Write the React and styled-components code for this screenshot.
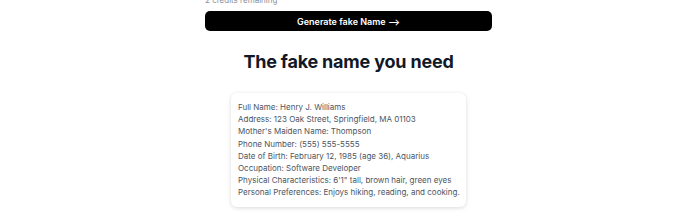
import React from "react";
import styled, { createGlobalStyle } from "styled-components";

const GlobalStyle = createGlobalStyle`
  html, body {
    margin: 0;
    padding: 0;
    background: #fff;
    font-family: Inter, "Noto Sans", sans-serif;
  }
`;

const Page = styled.div`
  display: flex;
  flex-direction: column;
  align-items: center;
  width: 700px;
  height: 220px;
  padding-right: 3px;
  box-sizing: border-box;
  overflow: hidden;
`;

const Column = styled.div`
  width: 287px;
  display: flex;
  flex-direction: column;
  align-items: center;
  margin-top: -5px;
`;

const Credits = styled.p`
  align-self: flex-start;
  margin: 0;
  font-size: 8px;
  line-height: 10px;
  color: #8b9099;
`;

const GenerateButton = styled.button`
  width: 100%;
  height: 20px;
  margin-top: 6px;
  border: none;
  border-radius: 5px;
  background: #000;
  color: #fff;
  font-family: Inter, sans-serif;
  font-size: 9px;
  font-weight: 600;
  cursor: pointer;
`;

const Heading = styled.h2`
  margin: 19px 0 0;
  font-size: 18px;
  line-height: 24px;
  font-weight: 700;
  color: #111827;
  letter-spacing: -0.2px;
`;

const Card = styled.div`
  margin-top: 19px;
  width: 235px;
  box-sizing: border-box;
  padding: 8px 7px;
  background: #fff;
  border-radius: 6px;
  box-shadow: 0 1px 4px rgba(0, 0, 0, 0.15);
`;

const Line = styled.p`
  margin: 0;
  font-size: 8px;
  line-height: 12.2px;
  color: #4b5563;
  white-space: nowrap;
`;

const details = [
  "Full Name: Henry J. Williams",
  "Address: 123 Oak Street, Springfield, MA 01103",
  "Mother's Maiden Name: Thompson",
  "Phone Number: (555) 555-5555",
  "Date of Birth: February 12, 1985 (age 36), Aquarius",
  "Occupation: Software Developer",
  "Physical Characteristics: 6'1\" tall, brown hair, green eyes",
  "Personal Preferences: Enjoys hiking, reading, and cooking.",
];

export default function App() {
  return (
    <>
      <GlobalStyle />
      <Page>
        <Column>
          <Credits>2 credits remaining</Credits>
          <GenerateButton>Generate fake Name ⟶</GenerateButton>
          <Heading>The fake name you need</Heading>
          <Card>
            {details.map((d) => (
              <Line key={d}>{d}</Line>
            ))}
          </Card>
        </Column>
      </Page>
    </>
  );
}
